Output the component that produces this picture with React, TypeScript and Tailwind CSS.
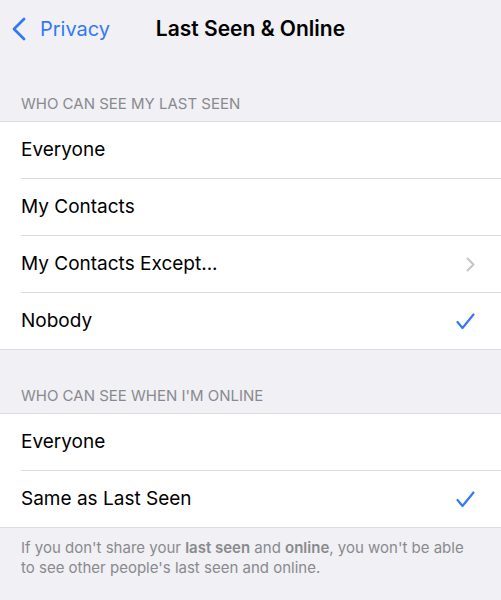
import React from 'react';

const Chevron = () => (
  <svg width="9" height="15" viewBox="0 0 9 15" fill="none">
    <path d="M1.5 1.5 L7.5 7.5 L1.5 13.5" stroke="#c4c4c7" strokeWidth="2" strokeLinecap="round" strokeLinejoin="round" />
  </svg>
);

const Check = () => (
  <svg width="19" height="17" viewBox="0 0 19 17" fill="none">
    <path d="M1.5 9 L6.5 15 L17.5 1.5" stroke="#3478f6" strokeWidth="2.2" strokeLinecap="round" strokeLinejoin="round" />
  </svg>
);

type Row = { label: string; accessory?: 'chevron' | 'check' };

const Section = ({ title, rows }: { title: string; rows: Row[] }) => (
  <div>
    <div className="pl-[21px] pt-[37px] pb-[9px] text-[15px] leading-[17px] text-[#8a8a8e] uppercase">
      {title}
    </div>
    <div className="bg-white border-y border-[#dcdce0]">
      {rows.map((r, i) => (
        <div key={r.label} className="pl-[21px]">
          <div
            className={`flex items-center justify-between pr-[26px] ${
              i < rows.length - 1 ? 'h-[57px] border-b border-[#dcdce0]' : 'h-[56px]'
            }`}
          >
            <span className="text-[19px] text-black">{r.label}</span>
            {r.accessory === 'chevron' && <Chevron />}
            {r.accessory === 'check' && <Check />}
          </div>
        </div>
      ))}
    </div>
  </div>
);

export default function App() {
  return (
    <div className="min-h-[600px] bg-[#f0f0f5]" style={{ fontFamily: 'Inter, "Liberation Sans", sans-serif' }}>
      {/* Nav bar */}
      <div className="h-[58px] grid grid-cols-[1fr_auto_1fr] items-center">
        <div className="flex items-center pl-[12px] gap-[14px]">
          <svg width="14" height="24" viewBox="0 0 14 24" fill="none">
            <path d="M12 2 L2 12 L12 22" stroke="#3478f6" strokeWidth="2.8" strokeLinecap="round" strokeLinejoin="round" />
          </svg>
          <span className="text-[20px] text-[#3478f6]">Privacy</span>
        </div>
        <div className="text-[21px] font-semibold text-black">Last Seen &amp; Online</div>
        <div />
      </div>

      <Section
        title="Who can see my last seen"
        rows={[
          { label: 'Everyone' },
          { label: 'My Contacts' },
          { label: 'My Contacts Except...', accessory: 'chevron' },
          { label: 'Nobody', accessory: 'check' },
        ]}
      />
      <Section
        title="Who can see when I'm online"
        rows={[{ label: 'Everyone' }, { label: 'Same as Last Seen', accessory: 'check' }]}
      />

      <p className="px-[21px] pt-[10px] text-[15px] leading-[20px] text-[#8a8a8e]">
        If you don't share your <span className="font-semibold">last seen</span> and{' '}
        <span className="font-semibold">online</span>, you won't be able to see other people's last seen and online.
      </p>
    </div>
  );
}
